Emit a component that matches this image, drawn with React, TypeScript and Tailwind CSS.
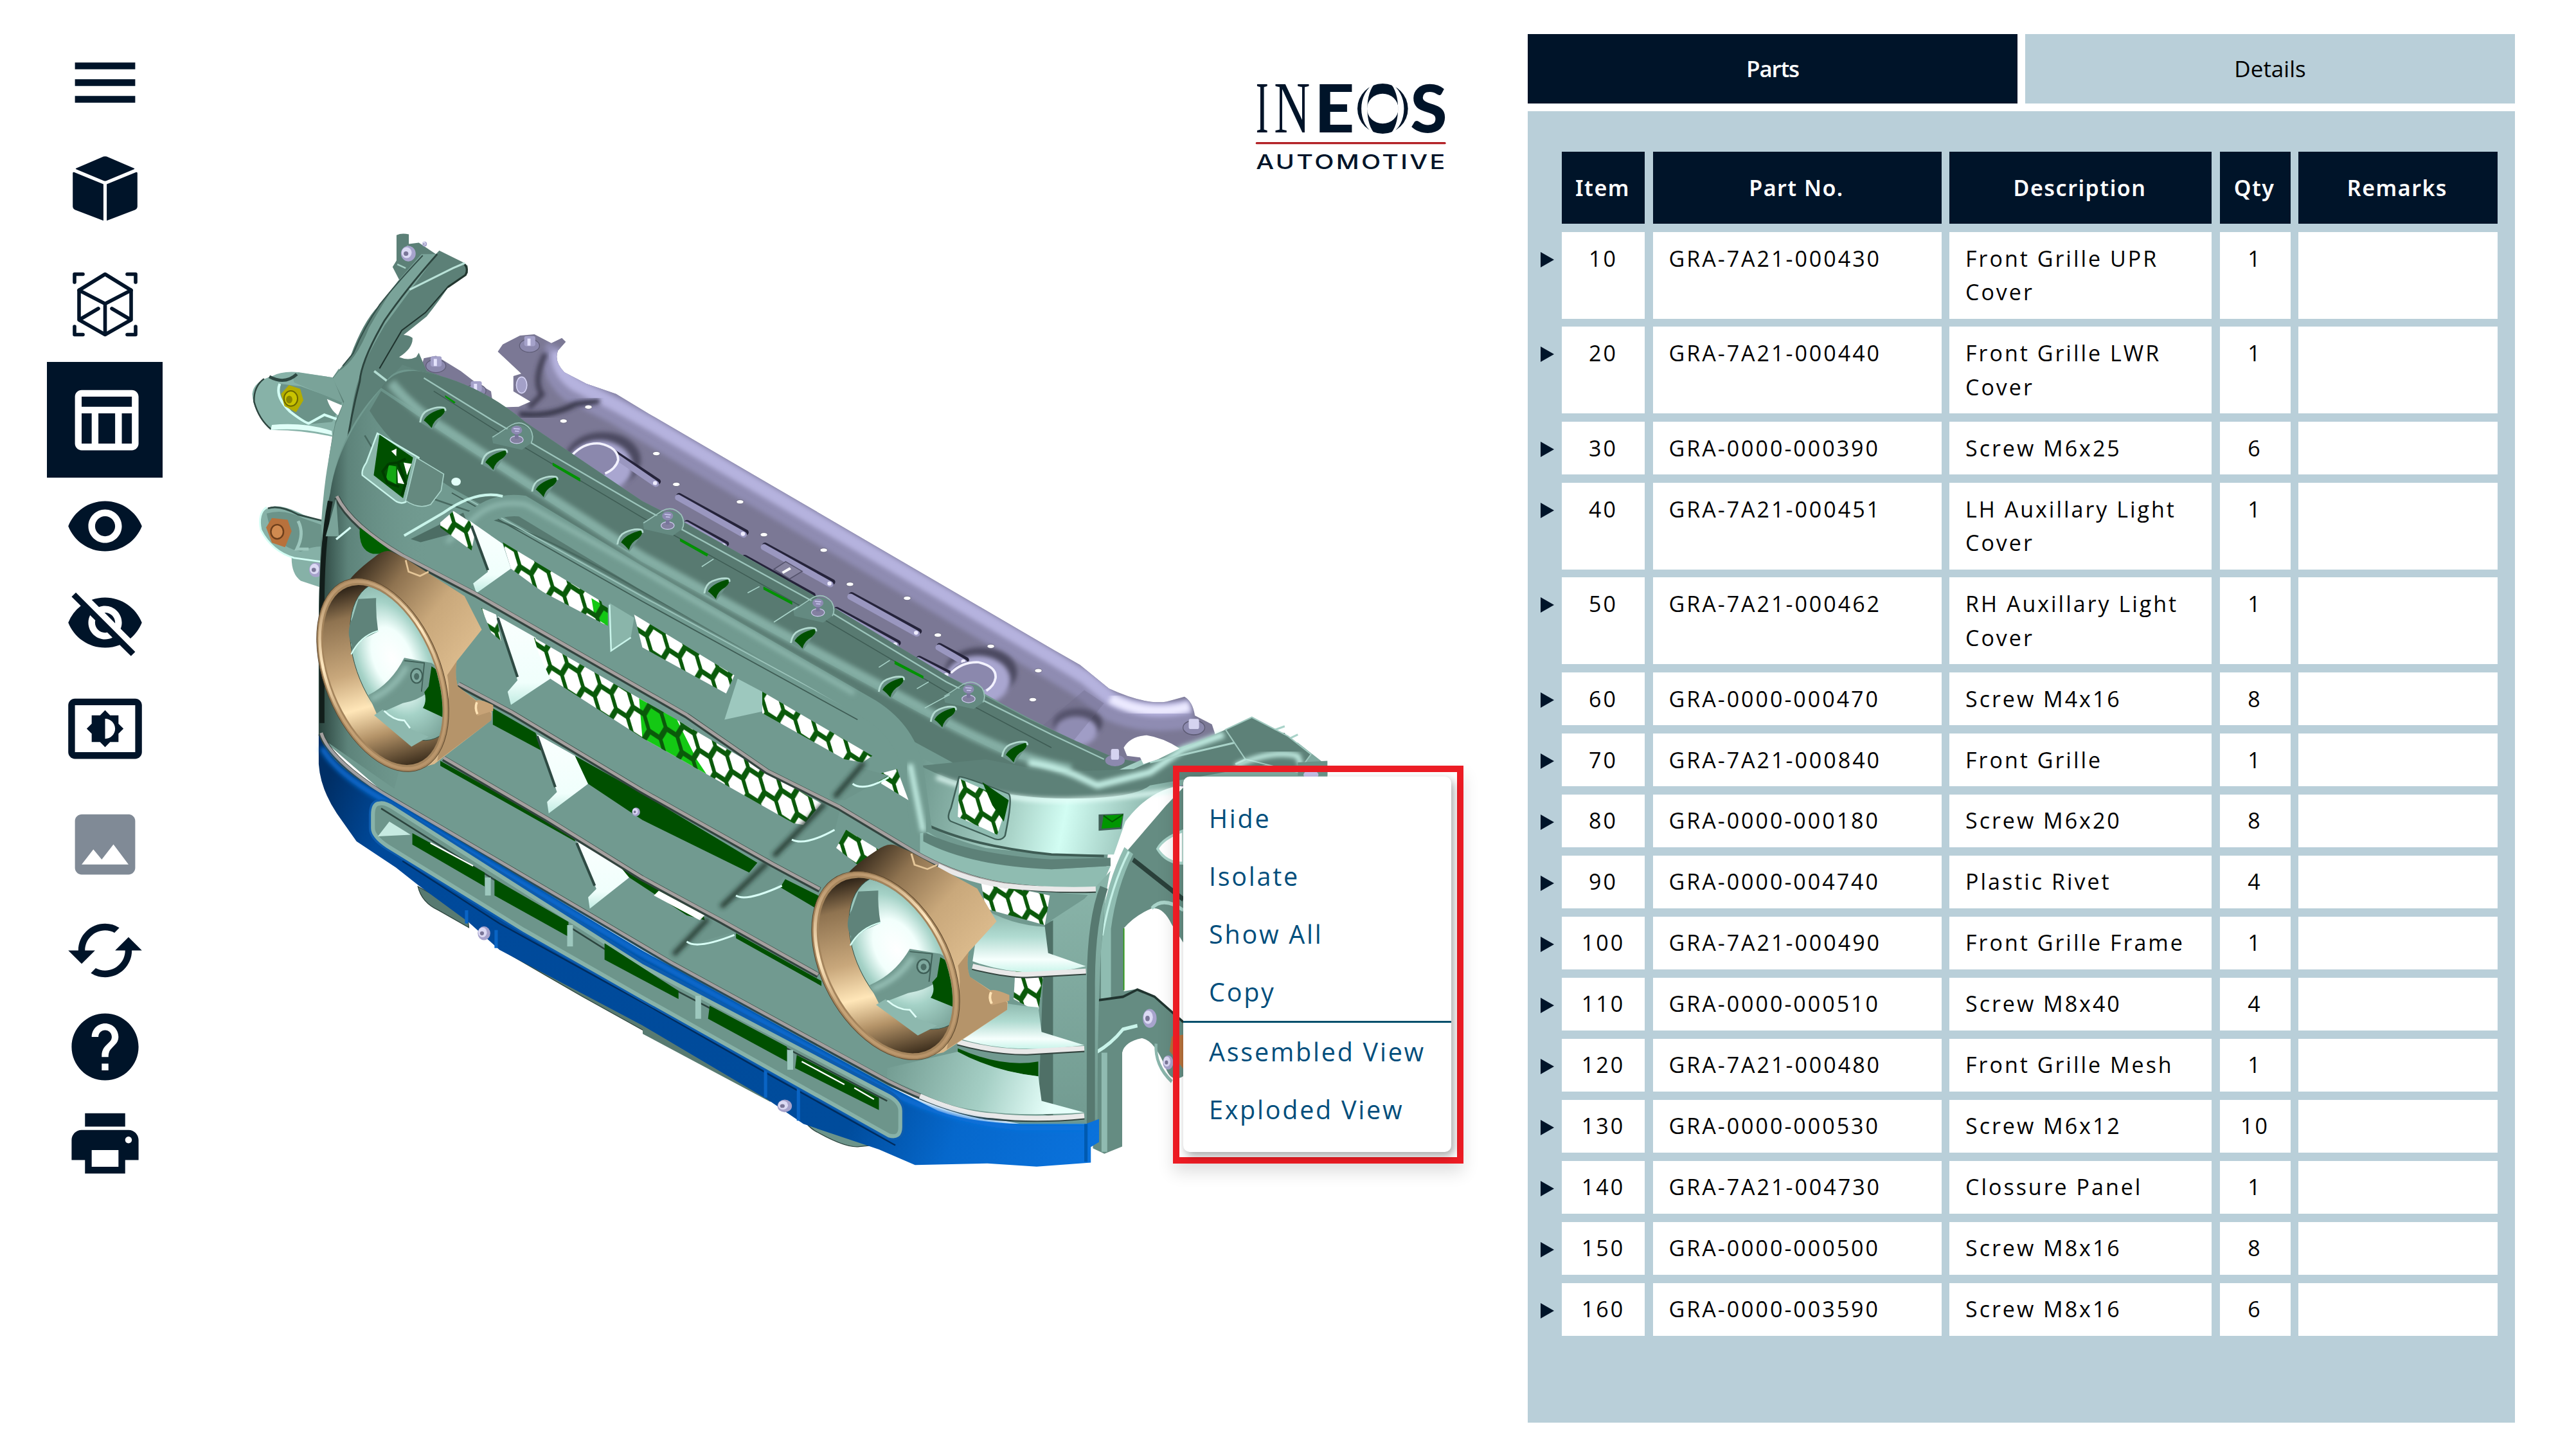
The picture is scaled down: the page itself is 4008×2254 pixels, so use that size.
import React from "react";
import {
  MdMenu,
  MdOutlineTableChart,
  MdVisibility,
  MdVisibilityOff,
  MdSettingsBrightness,
  MdImage,
  MdCached,
  MdHelp,
  MdPrint,
} from "react-icons/md";

const NAVY = "#001429";

function SolidCube() {
  return (
    <svg viewBox="0 0 125 125" className="size-[125px]" fill={NAVY}>
      <path d="M60 12.600Q62.500 11.800 65 12.600L107 30.500Q109.500 31.600 107 32.600L65 50Q62.500 51 60 50L18 32.600Q15.500 31.600 18 30.500Z" />
      <path d="M12.200 38.500Q12.200 36 14.600 37L59.900 55.500V112.200L16 95.600Q12.200 93.500 12.200 90Z" />
      <path d="M112.800 38.500Q112.800 36 110.400 37L65.100 55.500V112.200L109 95.600Q112.800 93.500 112.800 90Z" />
    </svg>
  );
}

function WireCube() {
  return (
    <svg
      viewBox="0 0 125 125"
      className="size-[125px]"
      fill="none"
      stroke={NAVY}
      strokeWidth="5.6"
      strokeLinecap="round"
      strokeLinejoin="round"
    >
      <path d="M15 28V15.500H28M97 15.500H110V28M15 97V109.500H28M97 109.500H110V97" />
      <path d="M62.500 15.500L103 40.500V86.500L62.500 109.500L22 86.500V40.500Z" />
      <path d="M22 40.500L62.500 61.500L103 40.500M62.500 61.500V109" />
      <path d="M24 85.500L52 69M101 85.500L73 69" />
    </svg>
  );
}

const tools = [
  { label: "Menu", tall: false, icon: <MdMenu /> },
  { label: "Solid view", tall: true, icon: <SolidCube /> },
  { label: "Fit view", tall: true, icon: <WireCube /> },
  { label: "Parts table", tall: true, icon: <MdOutlineTableChart />, active: true },
  { label: "Show", tall: false, icon: <MdVisibility /> },
  { label: "Hide", tall: false, icon: <MdVisibilityOff /> },
  { label: "Brightness", tall: true, icon: <MdSettingsBrightness /> },
  { label: "Image", tall: true, icon: <MdImage />, muted: true },
  { label: "Reset", tall: false, icon: <MdCached /> },
  { label: "Help", tall: false, icon: <MdHelp /> },
  { label: "Print", tall: false, icon: <MdPrint /> },
];

function Toolbar() {
  return (
    <nav className="flex w-[253px] shrink-0 flex-col pt-[53px] pl-[73px]">
      {tools.map((t) => (
        <button
          key={t.label}
          aria-label={t.label}
          className={`flex w-[180px] shrink-0 items-center justify-center text-[125px] ${
            t.tall ? "h-[180px]" : "h-[150px]"
          } ${t.active ? "bg-[#001429] text-white" : t.muted ? "text-[#808a96]" : "text-[#001429]"}`}
        >
          {t.icon}
        </button>
      ))}
    </nav>
  );
}

function Logo() {
  return (
    <svg viewBox="0 0 1080 570" className="absolute top-[100px] left-[1667px] h-[190px] w-[360px]">
      <g fill={NAVY}>
        <g fontFamily="'Liberation Serif', serif" fontSize="340">
          <text x="101" y="319" textLength="60" lengthAdjust="spacingAndGlyphs">I</text>
          <text x="187" y="319" textLength="168" lengthAdjust="spacingAndGlyphs">N</text>
        </g>
        <g fontFamily="Lato, sans-serif" fontWeight="900" fontSize="310">
          <text x="375" y="319" textLength="187" lengthAdjust="spacingAndGlyphs">E</text>
          <text x="823" y="319" textLength="172" lengthAdjust="spacingAndGlyphs">S</text>
        </g>
        <ellipse cx="694" cy="207" rx="118" ry="117" />
      </g>
      <g fill="#fff">
        <path d="M662 86C572 130 572 284 662 328C609 284 609 130 662 86Z" />
        <path d="M726 86C816 130 816 284 726 328C779 284 779 130 726 86Z" />
        <ellipse cx="694" cy="207" rx="73" ry="70" />
      </g>
      <rect x="101" y="363" width="888" height="10" rx="5" fill="#b21f24" />
      <text
        x="103"
        y="488"
        textLength="892"
        lengthAdjust="spacingAndGlyphs"
        fontFamily="Inter, sans-serif"
        fontSize="94"
        fontWeight="500"
        letterSpacing="8"
        fill={NAVY}
      >
        AUTOMOTIVE
      </text>
    </svg>
  );
}

/* Coordinate frames of the model's regions. */
const FRAME_TL = "translate(370 340) scale(.40816 .39541)";
const FRAME_TM = "translate(1000 600) scale(.40816 .39541)";
const FRAME_R = "translate(1600 950) scale(.44643 .56122)";
const FRAME_BL = "translate(370 850) scale(.44643)";
const FRAME_BR = "translate(1000 1200) scale(.5102 .40816)";
const FRAME_ALL = "scale(2.5561)";

function Scoop({ x, y }: { x: number; y: number }) {
  return (
    <g transform={`translate(${x} ${y})`}>
      <path d="M-50 32Q-45-5-20-18Q10-32 35-30Q52-28 48-14L-4 60Z" fill="#6b9288" />
      <path d="M-36 24Q-20-8 42-24Q50-10 30 8Q0 24-6 54Q-22 34-36 24Z" fill="#005000" />
      <path d="M-50 32Q-45-5-20-16Q10-30 35-27Q48-26 46-14" fill="none" stroke="#b4dbd1" strokeWidth="7" />
    </g>
  );
}

function Screw({ x, y }: { x: number; y: number }) {
  return (
    <g transform={`translate(${x} ${y})`}>
      <path d="M-95 8L-30-24Q10-55 50-20Q75 10 55 34L20 60L-90 34Z" fill="#648a81" />
      <path d="M-92 10L-20-38Q20-60 52-22Q68 8 55 34" fill="none" stroke="#9cc4bb" strokeWidth="4" />
      <ellipse cx="0" cy="20" rx="25" ry="15" fill="#8380a0" stroke="#cfcdf0" strokeWidth="3" />
      <rect x="-7" y="-18" width="14" height="34" fill="#77749a" />
      <ellipse cx="0" cy="-18" rx="21" ry="17" fill="#8d8ab2" />
      <path d="M-12-24L12-22M-7-14L9-13" stroke="#c9c7ee" strokeWidth="4" />
    </g>
  );
}

function Bolt({ x, y, r = 22 }: { x: number; y: number; r?: number }) {
  return (
    <g transform={`translate(${x} ${y}) scale(${r / 22})`}>
      <ellipse rx="22" ry="24" fill="#a7a3cc" />
      <ellipse cx="-5" cy="-3" rx="15" ry="17" fill="#dcdaf4" />
      <circle cx="-7" cy="0" r="7" fill="#7a7698" />
    </g>
  );
}

function LampRing() {
  return (
    <g>
      <path
        d="M-130-310Q-110-350-30-410Q5-440 30-430L75-408L285-275L345-158L258-48Q250 0 262 40L380 130L378 158L180 310L90 335Z"
        fill="url(#tube)"
      />
      <path d="M225 0Q240 80 215 150L190 300L378 158V132L262 40Q250 0 258-48Z" fill="#8f7049" opacity=".5" />
      <path d="M80-400L90-360L130-345L160-360" fill="none" stroke="#e5c698" strokeWidth="6" />
      <path d="M325 90Q335 80 385 105L385 125L330 142Q315 120 325 90Z" fill="#c7a377" />
      <path d="M328 95Q320 115 330 136" fill="none" stroke="#ffe3b5" strokeWidth="8" />
      <g transform="rotate(-22)">
        <ellipse rx="203" ry="354" fill="#a4845c" stroke="#5a452c" strokeWidth="2" />
        <ellipse rx="192" ry="343" fill="none" stroke="url(#rim)" strokeWidth="10" />
        <ellipse rx="181" ry="330" fill="url(#bore)" />
      </g>
      <g clipPath="url(#boreClip)">
        <g transform="translate(74 -48) rotate(-22)">
          <ellipse rx="166" ry="290" fill="url(#bowl)" stroke="#31524a" strokeWidth="2" />
        </g>
        <path d="M-108-105Q-130-150-105-200L-85-265L-23-268Q-25-210-16-152L-60-130Q-90-110-110-70Z" fill="#5f837a" />
        <path d="M-110-72Q-80-135-16-154" fill="none" stroke="#d7fff5" strokeWidth="5" />
        <path d="M-50 70Q30 30 75-60L170-42L200 -20L158 60Q120 90 70 98L-20 138Z" fill="#6f978d" />
        <path d="M-42 85Q40 50 84-30" fill="none" stroke="#9cc6bc" strokeWidth="16" filter="url(#ringSoft)" />
        <path d="M75-50L145-42L135 58" fill="none" stroke="#3f5f57" strokeWidth="4" />
        <path d="M170-30L200-10L215 150L140 115Q155 90 145 60L160 40Z" fill="#005000" />
        <ellipse cx="118" cy="3" rx="20" ry="25" fill="#7fa99f" stroke="#3f5f57" strokeWidth="5" />
        <ellipse cx="118" cy="5" rx="9" ry="12" fill="#4c6e66" />
        <path d="M0 120Q50 170 80 160L100 190L160 215L100 250L-30 140Z" fill="#8db8ae" />
        <path d="M5 125Q40 160 75 158L95 185" fill="none" stroke="#dffff8" strokeWidth="6" />
      </g>
    </g>
  );
}

function Model() {
  return (
    <svg viewBox="253 0 2124 2254" className="block h-[2254px] w-[2124px]">
      <defs>
        <pattern id="mesh" width="20" height="16" patternUnits="userSpaceOnUse" patternTransform="matrix(1 .65 -.03 1 4 3)">
          <rect width="20" height="16" fill="#0a5a0a" />
          <g fill="#fff">
            <path d="M4.800 8L7.400 1.700H12.600L15.200 8L12.600 14.300H7.400Z" />
            <path d="M-5.200 0L-2.600-6.300H2.600L5.200 0L2.600 6.300H-2.600Z" />
            <path d="M14.800 0L17.400-6.300H22.600L25.200 0L22.600 6.300H17.400Z" />
            <path d="M-5.200 16L-2.600 9.700H2.600L5.200 16L2.600 22.300H-2.600Z" />
            <path d="M14.800 16L17.400 9.700H22.600L25.200 16L22.600 22.300H17.400Z" />
          </g>
        </pattern>
        <pattern id="meshGreen" width="20" height="16" patternUnits="userSpaceOnUse" patternTransform="matrix(1 .65 -.03 1 4 3)">
          <rect width="20" height="16" fill="#0a5a0a" />
          <g fill="#14c814">
            <path d="M4.800 8L7.400 1.700H12.600L15.200 8L12.600 14.300H7.400Z" />
            <path d="M-5.200 0L-2.600-6.300H2.600L5.200 0L2.600 6.300H-2.600Z" />
            <path d="M14.800 0L17.400-6.300H22.600L25.200 0L22.600 6.300H17.400Z" />
            <path d="M-5.200 16L-2.600 9.700H2.600L5.200 16L2.600 22.300H-2.600Z" />
            <path d="M14.800 16L17.400 9.700H22.600L25.200 16L22.600 22.300H17.400Z" />
          </g>
        </pattern>
        <linearGradient id="tube" gradientUnits="userSpaceOnUse" x1="-100" y1="-370" x2="280" y2="-80">
          <stop offset="0" stopColor="#35291b" />
          <stop offset=".3" stopColor="#8f7350" />
          <stop offset=".65" stopColor="#c9a87b" />
          <stop offset="1" stopColor="#dab98b" />
        </linearGradient>
        <linearGradient id="rim" x1="0" y1="0" x2="0" y2="1">
          <stop offset="0" stopColor="#b8946a" />
          <stop offset=".35" stopColor="#ffe8c0" />
          <stop offset=".6" stopColor="#c9a679" />
          <stop offset="1" stopColor="#b8946a" />
        </linearGradient>
        <linearGradient id="bore" gradientUnits="userSpaceOnUse" x1="40" y1="-330" x2="-30" y2="330">
          <stop offset="0" stopColor="#2a2015" />
          <stop offset=".16" stopColor="#8f7350" />
          <stop offset=".45" stopColor="#c9a87c" />
          <stop offset=".64" stopColor="#ffe6b8" />
          <stop offset=".8" stopColor="#b49368" />
          <stop offset="1" stopColor="#3a2c1b" />
        </linearGradient>
        <radialGradient id="bowl" cx=".4" cy=".46" r=".58">
          <stop offset="0" stopColor="#fff" />
          <stop offset=".34" stopColor="#f2fffc" />
          <stop offset=".62" stopColor="#a5d2c7" />
          <stop offset="1" stopColor="#769f95" />
        </radialGradient>
        <clipPath id="boreClip">
          <ellipse rx="181" ry="330" transform="rotate(-22)" />
        </clipPath>
        <linearGradient id="fender" gradientUnits="userSpaceOnUse" x1="560" y1="470" x2="710" y2="500">
          <stop offset="0" stopColor="#719a90" />
          <stop offset=".4" stopColor="#a9d3c8" />
          <stop offset=".6" stopColor="#d2fdf3" />
          <stop offset="1" stopColor="#7fa99f" />
        </linearGradient>
        <linearGradient id="skirt" gradientUnits="userSpaceOnUse" x1="190" y1="500" x2="670" y2="690">
          <stop offset="0" stopColor="#002f66" />
          <stop offset=".08" stopColor="#00499a" />
          <stop offset=".72" stopColor="#004c9c" />
          <stop offset=".84" stopColor="#0668cc" />
          <stop offset="1" stopColor="#0a72dc" />
        </linearGradient>
        <linearGradient id="pillar" gradientUnits="userSpaceOnUse" x1="195" y1="0" x2="262" y2="0">
          <stop offset="0" stopColor="#2c4640" />
          <stop offset=".25" stopColor="#5d837a" />
          <stop offset="1" stopColor="#719a90" stopOpacity="0" />
        </linearGradient>
        <linearGradient id="wedge" x1="0" y1="0" x2="0" y2="1">
          <stop offset="0" stopColor="#fafffe" />
          <stop offset=".75" stopColor="#f0fffc" />
          <stop offset="1" stopColor="#c0ebe1" />
        </linearGradient>
        <linearGradient id="rightCol" x1="0" y1="0" x2="0" y2="1">
          <stop offset="0" stopColor="#8ab5aa" />
          <stop offset="1" stopColor="#729b91" />
        </linearGradient>
        <linearGradient id="slat" x1="0" y1="0" x2="0" y2="1">
          <stop offset="0" stopColor="#86b1a6" />
          <stop offset=".45" stopColor="#b0dbd1" />
          <stop offset=".8" stopColor="#f6fffd" />
          <stop offset="1" stopColor="#c9f4ea" />
        </linearGradient>
        <linearGradient id="sill" gradientUnits="userSpaceOnUse" x1="540" y1="640" x2="640" y2="672">
          <stop offset="0" stopColor="#719a90" />
          <stop offset=".6" stopColor="#a5cfc5" />
          <stop offset="1" stopColor="#e6fffa" />
        </linearGradient>
        <filter id="soft" x="-20%" y="-20%" width="140%" height="140%">
          <feGaussianBlur stdDeviation="1.4" />
        </filter>
        <filter id="ringSoft" x="-20%" y="-20%" width="140%" height="140%">
          <feGaussianBlur stdDeviation="9" />
        </filter>
        <clipPath id="plateClip">
          <path d="M303 214L306 209.600L316.500 204.200L325.300 203.400L335.600 208.800L342 205.700L344.400 208L339.600 213.400Q337 220 343.600 226.600L357 233.600L375 239.700L395 251.800L641.600 395.600L657.400 404.600L675 419Q697 429 710 427L721 424Q726 427 727.300 435.400L737.700 440.800L739.500 446.300L740 480L600 470L256 225L258 218L265.400 216.500L280.500 225.800L288.500 232L298.900 238.200L299.700 243.600L306 247.800L315.700 247.500L322.900 244.400L312.500 238.200V228.900L317.300 227.400Z" />
        </clipPath>
      </defs>

      {/* upper closure panel */}
      <g transform={FRAME_ALL}>
        <g clipPath="url(#plateClip)">
          <rect x="250" y="195" width="500" height="290" fill="#7b7895" />
          <path d="M341 212Q335 224 348 236L376 250L396 262L640 405L660 417L676 430Q698 440 726 434" fill="none" stroke="#8f8cb2" strokeWidth="17" filter="url(#soft)" />
          <path d="M340 214Q338 225 350 234L376 247L396 258L640 400L660 412L676 425Q698 436 724 430" fill="none" stroke="#b5b2de" strokeWidth="8" filter="url(#soft)" />
          <path d="M676 425Q698 437 724 430" fill="none" stroke="#eceaff" strokeWidth="6" filter="url(#soft)" />
          <path d="M332 215Q324 232 330 240L322 248" fill="none" stroke="#3c3a50" strokeWidth="3" filter="url(#soft)" />
          <path d="M316 252Q335 254 350 246L365 244" fill="none" stroke="#2f2d40" strokeWidth="3" filter="url(#soft)" />
          <ellipse cx="367" cy="280" rx="23" ry="17" fill="#4c4a60" filter="url(#soft)" />
          <ellipse cx="365" cy="284" rx="20" ry="16" fill="#a9a6d0" filter="url(#soft)" />
          <ellipse cx="597" cy="409" rx="22" ry="15" fill="#4c4a60" filter="url(#soft)" />
          <ellipse cx="595" cy="414" rx="20" ry="15" fill="#a9a6d0" filter="url(#soft)" />
          <ellipse cx="656" cy="440" rx="15" ry="9" fill="#4c4a60" filter="url(#soft)" />
          <ellipse cx="655" cy="445" rx="13" ry="9" fill="#a09dc6" filter="url(#soft)" />
          <path d="M627 448L660 420L672 428L650 455Z" fill="#6a6784" opacity=".3" />
        </g>
      </g>
      <g transform={FRAME_TM}>
        {[
          [-130, 255, 50, 383],
          [135, 437, 385, 583],
          [462, 632, 715, 778],
          [792, 827, 1045, 972],
          [1128, 1027, 1225, 1085],
          [165, 543, 310, 628],
          [385, 680, 640, 830],
          [735, 885, 965, 1018],
          [1050, 1077, 1160, 1138],
        ].map(([a, b, c, d]) => (
          <g key={a + "-" + b} strokeLinecap="round">
            <line x1={a + 4} y1={b - 4} x2={c + 8} y2={d - 6} stroke="#25233a" strokeWidth="22" />
            <line x1={a} y1={b + 3} x2={c} y2={d + 3} stroke="#9a97c0" strokeWidth="24" />
            <circle cx={c - 3} cy={d} r="8" fill="#eeecff" />
          </g>
        ))}
        <path d="M500 722L545 692L608 730L560 760Z" fill="#86839f" stroke="#55536c" strokeWidth="4" />
        <path d="M530 732L560 714L566 722L536 740Z" fill="#fff" />
        <g fill="#fff" stroke="#5d5b74" strokeWidth="2">
          {[
            [52, 267], [128, 388], [371, 457], [462, 586], [690, 647], [790, 781],
            [1008, 836], [1125, 981], [1327, 1025], [1508, 1121], [1487, 1235],
            [-207, 84], [-302, 139],
          ].map(([x, y]) => (
            <ellipse key={x} cx={x} cy={y} rx="14" ry="8" />
          ))}
        </g>
        <ellipse cx="1255" cy="1145" rx="85" ry="62" fill="#8b88ad" />
        <path d="M1175 1130Q1220 1085 1280 1088Q1350 1105 1345 1150Q1340 1180 1310 1200" fill="none" stroke="#f3f2ff" strokeWidth="9" />
      </g>
      <g transform={FRAME_TL}>
        <ellipse cx="1360" cy="950" rx="85" ry="66" fill="#8b88ad" />
        <path d="M1275 930Q1320 880 1380 885Q1450 900 1450 950Q1440 985 1400 1003" fill="none" stroke="#f3f2ff" strokeWidth="9" />
        {[[1112, 490], [755, 570], [908, 668]].map(([x, y]) => (
          <g key={x} transform={`translate(${x} ${y})`}>
            <ellipse cy="10" rx="38" ry="26" fill="#8c89ae" stroke="#5d5b74" strokeWidth="3" />
            <rect x="-20" y="-28" width="42" height="40" rx="8" fill="#a5a2ca" />
            <rect x="-8" y="-18" width="12" height="28" fill="#e4e2fb" />
          </g>
        ))}
        <ellipse cx="1082" cy="655" rx="20" ry="32" fill="#a3a0c8" stroke="#d4d2f3" strokeWidth="4" />
        <path d="M1140 850L1260 930" stroke="#25233a" strokeWidth="18" strokeLinecap="round" />
        <path d="M1145 860L1255 932" stroke="#9a97c0" strokeWidth="16" strokeLinecap="round" />
      </g>

      {/* left-hand brackets and tower */}
      <g transform={FRAME_TL}>
        <path d="M360 625L235 605Q170 598 130 620Q60 640 55 690Q58 760 125 832Q240 830 360 858L420 700Z" fill="#87b2a8" />
        <path d="M100 630Q60 660 62 720Q80 790 128 830" fill="none" stroke="#2c443e" strokeWidth="6" />
        <path d="M160 650Q150 740 260 810L360 800L400 720L240 660Z" fill="#6b9389" />
        <path d="M125 832Q240 820 360 852L358 835Q250 800 130 812Z" fill="#e0fff8" />
        <path d="M160 650Q140 700 200 760Q250 800 270 806L330 772L380 790" fill="none" stroke="#d4fff5" strokeWidth="10" />
        <path d="M340 710Q355 760 392 780L398 735Z" fill="#fff" />
        <path d="M210 625L230 606L362 625L385 590L430 705L400 725L215 645Z" fill="#7aa399" />
        <path d="M120 622Q180 655 225 612" fill="none" stroke="#2f4943" strokeWidth="12" />
        <path d="M165 690L195 655L238 670L250 715L222 762L178 738Z" fill="#b3ad00" />
        <ellipse cx="202" cy="708" rx="26" ry="30" fill="#c9c300" stroke="#6b6800" strokeWidth="5" />
        <ellipse cx="196" cy="712" rx="12" ry="15" fill="#8a8600" />

        <path d="M322 1190L250 1165Q180 1130 140 1132Q85 1140 84 1190Q90 1250 130 1285Q170 1320 205 1335Q205 1400 240 1425L312 1450Z" fill="#86b1a7" />
        <path d="M110 1160Q180 1140 250 1180L320 1205V1290Q280 1290 240 1310Q130 1290 110 1160Z" fill="#6b9389" />
        <path d="M110 1135Q75 1160 88 1225Q130 1310 215 1335L320 1350" fill="none" stroke="#d4fff5" strokeWidth="7" />
        <path d="M230 1190Q255 1240 225 1300L270 1300" fill="none" stroke="#9cc6bc" strokeWidth="12" />
        <path d="M115 1140Q160 1125 230 1165L320 1188" fill="none" stroke="#2f4943" strokeWidth="7" />
        <path d="M108 1215L130 1178L190 1185L205 1230L180 1293L130 1275Z" fill="#b8713c" />
        <ellipse cx="150" cy="1232" rx="24" ry="28" fill="#d08a50" stroke="#6e3f1c" strokeWidth="6" />
        <Bolt x={298} y={1382} r={26} />

        <path
          d="M605 65Q625 55 652 62V100L690 95L755 140L768 126L825 155L855 170L876 185V215Q840 250 802 270Q770 320 720 385L632 458Q655 460 666 470Q668 510 615 545Q650 560 680 545L690 528L720 600Q860 640 980 770L900 1000L540 1568H312Q305 1200 360 860L372 800L402 725L362 625L430 540Q480 400 540 340L615 240L590 190L605 165Z"
          fill="#5c8077"
        />
        <path d="M700 140L615 240Q560 320 500 430Q450 560 385 600L362 630L405 720L372 810Q330 1000 318 1200L330 1500L420 1300Q400 800 465 620Q480 560 560 420L760 140Z" fill="#7aa399" />
        <path d="M760 140Q640 280 560 400Q470 560 465 640Q430 780 415 900Q410 1000 470 1060" fill="none" stroke="#2c443e" strokeWidth="7" />
        <path d="M705 145Q600 260 540 340Q480 430 440 530L400 580" fill="none" stroke="#34504a" strokeWidth="5" />
        <path d="M655 280L820 195L865 175" fill="none" stroke="#b9e2d8" strokeWidth="8" />
        <path d="M800 270L715 370L625 440L540 590" fill="none" stroke="#1f332e" strokeWidth="5" />
        <path d="M520 600L585 652L612 640" fill="none" stroke="#b3dcd2" strokeWidth="9" />
        <path d="M865 180Q880 200 868 222L800 270" fill="none" stroke="#22362f" strokeWidth="8" />
        <path d="M608 180L640 195M645 108L665 120" stroke="#a6cfc5" strokeWidth="6" />
        <Bolt x={650} y={138} r={28} />
        <Bolt x={712} y={100} r={9} />
      </g>

      {/* lower flaps behind the skirt */}
      <g transform={FRAME_BL}>
        <path d="M628 1185Q640 1240 700 1268L805 1328L800 1280Z" fill="#587a71" stroke="#2c443e" strokeWidth="3" />
        <path d="M920 1375L930 1412L1200 1568L1420 1690L1400 1600Z" fill="#587a71" stroke="#2c443e" strokeWidth="3" />
      </g>
      <g transform={FRAME_BR}>
        <path d="M0 1000L390 1260L375 1200L0 940Z" fill="#587a71" />
        <path d="M488 1300Q490 1350 540 1380Q620 1435 660 1430L700 1425Z" fill="#6c948a" stroke="#2c443e" strokeWidth="3" />
      </g>

      {/* right-hand support */}
      <g transform={FRAME_R}>
        <path d="M345 665L480 540L540 490V920L500 870Q470 820 430 825Q370 845 333 880V1055L380 1048L440 1070L540 1140V1290Q500 1310 480 1270Q440 1190 395 1185Q335 1195 327 1225V1485L265 1505L225 1490V900Z" fill="#658c82" />
        <path d="M350 665Q290 760 270 880V1075" fill="none" stroke="#8fbcb1" strokeWidth="36" filter="url(#soft)" />
        <path d="M350 668Q290 760 258 900" fill="none" stroke="#c5f0e6" strokeWidth="7" />
        <path d="M240 1080L330 1070L380 1050L440 1070L540 1140" fill="none" stroke="#20342f" strokeWidth="7" />
        <path d="M235 1225Q290 1200 330 1160L380 1150" fill="none" stroke="#c9f4ea" strokeWidth="10" />
        <path d="M265 1225V1500" stroke="#90bbb1" strokeWidth="20" />
        <path d="M333 880V1052" stroke="#2f9b14" strokeWidth="4" />
        <path d="M365 690L540 800" stroke="#2a403a" strokeWidth="14" />
        <path d="M450 660Q470 630 540 610V700Q480 700 450 660Z" fill="#fff" stroke="#a9d3c9" strokeWidth="8" />
        <path d="M430 825Q470 790 540 830" fill="none" stroke="#a9d3c9" strokeWidth="10" />
        <path d="M540 1175L500 1180L492 1220L540 1270Z" fill="#b8713c" />
        <path d="M445 1200Q440 1260 500 1305" fill="none" stroke="#8ab5ab" strokeWidth="10" />
        <Bolt x={423} y={1130} r={24} />
        <Bolt x={487} y={1252} r={18} />
      </g>

      {/* grille body */}
      <g transform={FRAME_ALL}>
        <path
          d="M256 226Q240 222 234 234Q206 262 201 300Q194 330 194 380V448L232 481L391 578L541 661L581 676L621 684H661L668 681V600L672 560Q672 510 684 480L706 452L720 455L699 465L678 461L655 451Q625 437 599 422L576 411L508 370L493 361L415 317L391 305L320 257Q290 232 256 226Z"
          fill="#719a90"
        />
        <path d="M245 222Q206 262 201 300Q194 330 194 380V448L240 480L262 400V228Z" fill="url(#pillar)" />

        {/* top deck */}
        <path d="M256 226Q240 224 232 236L272 262L304 282L391 339L471 383L563 432L615 458L652 471L720 470L746 445L720 455L699 465L678 461L655 451L625 437L576 411L508 370L493 361L415 317L391 305L320 257Q290 232 256 226Z" fill="#587a71" />
        <path d="M225 250Q240 275 275 297L391 362L530 437L600 475L700 470L660 468L615 461L560 434L391 342L272 265L232 238Z" fill="#587a71" />
        <path d="M238 233Q252 250 272 262L304 283L391 339L471 383L563 432Q610 460 652 468" fill="none" stroke="#84aea4" strokeWidth="6" filter="url(#soft)" />
        <path d="M222 265Q236 290 262 303L300 316Q330 325 391 360L470 403L540 442Q560 455 562 475" fill="none" stroke="#486960" strokeWidth="1" />
        <path d="M285 304L391 363L520 433" fill="none" stroke="#9cc4bb" strokeWidth=".7" />
        <path d="M275 300L391 366L522 438" fill="none" stroke="#3e5c54" strokeWidth=".7" />
        <path d="M258 230L300 256L391 309L493 365L576 415L640 447L672 462" fill="none" stroke="#9cc4bb" strokeWidth=".9" />
        <path d="M264 238L302 262L391 315L493 372L576 421L640 455" fill="none" stroke="#3e5c54" strokeWidth=".6" />

        {/* fender */}
        <path d="M559 460Q590 478 626 476L660 478L700 460L745 447L790 452L808 466V480L720 478Q700 480 685 500L678 520H640L600 516Q575 510 562 500Z" fill="url(#fender)" />
        <path d="M560 466Q600 486 650 486Q690 486 700 478L790 462L782 446L746 444L690 468L640 470L600 462Z" fill="#5d8178" />
        <path d="M570 473Q610 488 650 487Q680 486 715 481" fill="none" stroke="#e6fffa" strokeWidth="2.500" filter="url(#soft)" />
        <path d="M626 464Q640 466 653 471L668 478L700 470L720 456L745 447" fill="none" stroke="#c5f0e6" strokeWidth="4" filter="url(#soft)" />
        <path d="M700 464L760 450L782 442M752 465L790 447" fill="none" stroke="#a9d3c9" strokeWidth="1.200" />
        <path d="M746 444L762 436.500L784 448L798 459L790 470L758 462Z" fill="#5d8178" stroke="#a0c9bf" strokeWidth=".8" />
        <path d="M752 466Q775 456 790 460L792 466" fill="none" stroke="#c9f4ea" strokeWidth="3" filter="url(#soft)" />
        <path d="M790 464L808 463L808 472H790Z" fill="#6b9389" />
        <path d="M684 455Q688 448 698 447.500Q708 449 718 455.500L705 462L696 465L694 461L686 460Z" fill="#fff" />
        <path d="M560 500Q590 515 640 520L672 521" fill="none" stroke="#3e5c54" strokeWidth="1.500" />
        <path d="M560 503Q590 525 640 529L676 527L668 545L640 543Q590 540 560 520Z" fill="#8fbcb1" />
        <path d="M562 506Q590 520 640 523L676 522L676 527L640 529Q590 527 562 512Z" fill="#5d8178" />

        {/* right column */}
        <path d="M640 560L660 547L676 530Q668 560 668 681L640 680Z" fill="url(#rightCol)" />
        <path d="M636 563L641 560V680L632 677Z" fill="#4f7067" />
        <path d="M672 540Q664 560 664 600V684" fill="none" stroke="#577970" strokeWidth="5" />

        {/* frame lip */}
        <path d="M274 330L290 316Q302 306 318 308L391 352L530 432Q552 446 556 470L561 507" fill="none" stroke="#719a90" strokeWidth="13" />
        <path d="M272 330L290 314Q302 304 320 307L391 347L520 422" fill="none" stroke="#8cb6ac" strokeWidth="3" filter="url(#soft)" />
        <path d="M554 465L562 506" stroke="#c9f4ea" strokeWidth="3" filter="url(#soft)" />
        <path d="M246 326L270 312Q290 298 306 302" fill="none" stroke="#c9f4ea" strokeWidth="1.600" />
        <path d="M250 328L282 312L286 322L256 330Z" fill="#4c6d64" />
      </g>

      {/* grille openings */}
      <g transform={FRAME_ALL}>
        {/* band A */}
        <path d="M268 318L276 311L290 320L287 335L268 321Z" fill="url(#mesh)" />
        <path d="M286 317L306 331L311 346L290 361L288 355L297 348Z" fill="url(#wedge)" />
        <path d="M306 330L366 366L369 376L368 380L330 360L311 346Z" fill="url(#mesh)" />
        <path d="M386 374L391 377L447 411L442 422L391 394Z" fill="url(#mesh)" />
        <path d="M360 364L370 370L370 381L362 376Z" fill="url(#meshGreen)" />
        <path d="M371 367L386 376L384 388L372 396Z" fill="#8ab5aa" />
        <path d="M371 368L372 396L384 388" fill="none" stroke="#c9f4ea" strokeWidth="1" />
        <path d="M449 413L464 421V433L441 438Z" fill="#9dc8be" />
        <path d="M464 421L531 460L525 464L514 462L464 434Z" fill="url(#mesh)" />
        <path d="M531 472L546 468L553 487L530 473Z" fill="url(#mesh)" />

        {/* band B */}
        <path d="M293 370L302 374L305 390L299 385Z" fill="url(#mesh)" />
        <path d="M303 375L326 388L335 413L311 429L309 421L315 414Z" fill="url(#wedge)" />
        <path d="M325 388L391 426L434 451L500 489L489 502L483 501L391 449L335 413L328 398Z" fill="url(#mesh)" />
        <path d="M389 425L412 438L424 462L430 471L391 449Z" fill="url(#meshGreen)" />
        <path d="M515 505L543 522L528 531L509 516Z" fill="url(#mesh)" />

        {/* band C */}
        <path d="M300 431L326 446L330 457L300 441Z" fill="#005000" />
        <path d="M327 447L350 460L358 477L334 495L333 488L339 482Z" fill="url(#wedge)" />
        <path d="M350 460L391 483L461 525L456 531L391 499L358 477Z" fill="#005000" />
        <path d="M478 535L500 546L497 553L475 540Z" fill="#005000" />

        {/* band D */}
        <path d="M268 463L350 509L350 512L268 466Z" fill="#005000" />
        <path d="M351 512L378 528L383 534L359 553L358 546L363 541Z" fill="url(#wedge)" />
        <path d="M378 528L428 556L429 560L418 557L383 534Z" fill="#005000" />
        <path d="M401 542L429 557L426 560L398 545Z" fill="#fff" />
        <path d="M448 568L500 597V600L448 571Z" fill="#005000" />
        <g fill="none" stroke="#2e4a43" strokeWidth="1.600">
          <path d="M287 320L297 347" />
          <path d="M303 376L315 412" />
          <path d="M327 448L338 479" />
          <path d="M351 513L362 539" />
        </g>

        {/* ribs right of centre */}
        {[
          "M523 467L541 472L514 487L507 486Z",
          "M502 489L511 494L508 506L484 513L470 521Z",
          "M467 525L478 532L472 540L454 546L439 552Z",
          "M431 559L447 567L420 575L411 580Z",
        ].map((d) => (
          <path key={d} d={d} fill="#6d958b" />
        ))}
        <g fill="none" stroke="#1c2d28" strokeWidth="3" opacity=".85" filter="url(#soft)">
          <path d="M526 464L508 485" />
          <path d="M502 489L471 521" />
          <path d="M467 525L439 552" />
          <path d="M431 559L410 581" />
        </g>
        <g fill="none" stroke="#d8fff6" strokeWidth="1.200">
          <path d="M519 477Q526 482 541 473" />
          <path d="M482 511Q490 515 508 505" />
          <path d="M448 545Q454 549 476 539" />
          <path d="M418 573Q424 578 447 569" />
        </g>

        {/* right slats and mesh */}
        <path d="M597 536L639 545L636 563L600 553Z" fill="url(#mesh)" />
        <path d="M618 590L635 594L632 616L617 608Z" fill="url(#mesh)" />
        <path d="M597 552Q615 563 636 564L638 580L661 588Q625 597 592 585Z" fill="url(#slat)" />
        <path d="M600 608Q616 612 632 613L634 628L660 636Q615 642 584 632Z" fill="url(#slat)" />
        <path d="M583 638Q610 650 632 646V655Q605 652 583 642Z" fill="#005000" />
        <path d="M540 650L583 640Q605 652 632 655L634 670L660 677Q600 681 571 670L540 656Z" fill="url(#sill)" />

        {/* trim strips */}
        <g fill="none" strokeLinejoin="round">
          {[
            "M205 302Q214 320 245 338L289 361L418 435L467 469L511 491L551 515Q580 533 611 538Q640 542 667 541",
            "M279 416L311 433L391 481L471 526L499 541",
            "M592 588Q612 593 625 593L661 591",
            "M270 461L333 498L391 534L439 560L498 593",
            "M583 634Q605 640 625 640L660 638",
            "M195.500 446Q200 461 232 482L360 557L409 586L541 658Q575 675 600 679Q630 682 660 679",
          ].map((d) => (
            <g key={d}>
              <path d={d} stroke="#33443f" strokeWidth="3.400" transform="translate(0 .6)" />
              <path d={d} stroke="#a5a09f" strokeWidth="1.900" />
            </g>
          ))}
          <g stroke="#e9e9e9" strokeWidth="3">
            <path d="M571 527Q590 536 611 539Q640 542 667 541" />
            <path d="M592 588Q612 593 625 593L661 591" />
            <path d="M583 634Q605 640 625 640L660 638" />
            <path d="M560 667Q585 678 605 679Q630 682 660 679" />
          </g>
        </g>
        <path d="M201 305Q196 330 196 370V440" fill="none" stroke="#121d1a" strokeWidth="3" />
        <path d="M219 321Q218 335 227 337L240 337Z" fill="#006000" />
      </g>

      {/* lamp apertures in the bumper */}
      <g transform={FRAME_TL}>
        <path d="M532 845L690 940L640 1115Q620 1125 600 1110L475 1010Q470 990 490 960Z" fill="#8ab5aa" stroke="#c9f4ea" strokeWidth="6" />
        <path d="M540 850L668 940L630 1100L518 1010Z" fill="#005000" />
        <path d="M585 915L605 905L604 935ZM632 960L662 965L645 1010ZM608 985L635 1045L610 1040Z" fill="#fff" />
        <path d="M575 970L604 975V1045L565 1025Z" fill="#14a814" />
        <path d="M575 965L610 960L640 1040L625 1090M575 965L552 995L570 1040L615 1055M610 960L640 945" fill="none" stroke="#003c00" strokeWidth="10" />
        <path d="M680 940L785 1005L775 1070L735 1125Q690 1145 640 1110Z" fill="#65897f" stroke="#a9d3c9" strokeWidth="4" />
        <path d="M335 1250L375 1100L385 1250Z" fill="#7aa399" />
        <path d="M375 1262L430 1215" stroke="#d8fff6" strokeWidth="8" />
        <Screw x={1063} y={850} />
        {[[745, 770], [980, 935], [1172, 1042], [1497, 1250]].map(([x, y]) => (
          <Scoop key={x} x={x} y={y} />
        ))}
        <path d="M1200 960L1305 1022V1035L1200 972ZM790 695L830 722L825 728L790 702Z" fill="#009200" />
        <ellipse cx="832" cy="1035" rx="18" ry="16" fill="#e3fff9" filter="url(#soft)" />
      </g>
      <g transform={FRAME_TM}>
        {[[285, 785], [615, 980], [950, 1172], [1148, 1290], [1420, 1428]].map(([x, y]) => (
          <Scoop key={x} x={x} y={y} />
        ))}
        {[[95, 530], [668, 872], [1242, 1212]].map(([x, y]) => (
          <Screw key={x} x={x} y={y} />
        ))}
        <path d="M142 600L250 662L245 672L142 612ZM460 790L570 850V862L460 802ZM960 1082L1070 1142V1153L960 1095Z" fill="#009200" />
        <path d="M225 712L270 682M400 815L445 790M900 1108L942 1080M1045 1192L1090 1165M500 930L590 870M1075 1268L1170 1215" stroke="#a9d3c9" strokeWidth="4" />
      </g>
      <g transform={FRAME_R}>
        <g transform="translate(577 318)">
          <ellipse cy="6" rx="38" ry="20" fill="#8c89ae" stroke="#5d5b74" strokeWidth="3" />
          <rect x="-18" y="-18" width="36" height="28" rx="6" fill="#d5d3f0" />
        </g>
        <g transform="translate(302 405)">
          <ellipse cy="10" rx="34" ry="16" fill="#8c89ae" />
          <rect x="-14" y="-22" width="28" height="30" rx="6" fill="#d5d3f0" />
        </g>
        <path d="M245 565L332 562L325 605L245 610Z" fill="#3f5f57" />
        <path d="M262 568L330 565L320 600L255 604Z" fill="#009600" />
        <path d="M262 568L292 585L330 565" fill="none" stroke="#005c00" strokeWidth="4" />
        <ellipse cx="985" cy="455" rx="26" ry="12" fill="#c3c0e6" />
      </g>
      <g transform={FRAME_BR}>
        <path d="M965 20Q980 18 1115 85Q1130 95 1105 245Q1095 265 1075 258L940 190Q925 180 940 140Z" fill="#8fbcb1" stroke="#3f5f57" strokeWidth="5" />
      </g>
      <g transform={FRAME_ALL}>
        <path d="M584 474L614 487L607 508L583 497Z" fill="url(#mesh)" />
        <path d="M598 476L614 487L611 500L604 490Z" fill="#005000" />
      </g>

      {/* blue skirt */}
      <g transform={FRAME_ALL}>
        <path
          d="M194 447V465Q195 480 205 495L217 512L241 528L255 539L285 561L304 578L391 624L467 669L489 684L535 699.500L557 709L601 708L631 710L664 707.500V698L669 695V681L661 684H621Q590 683 571 676L541 661L391 578.500L232 483Q200 465 194 447Z"
          fill="url(#skirt)"
        />
        <path d="M196 455Q204 470 232 486L391 581L541 664Q575 682 621 686.500H661" fill="none" stroke="#0a72dc" strokeWidth="3" filter="url(#soft)" />
        <path d="M661 684V707" stroke="#005ab0" strokeWidth="2" />
        <path d="M245 524L304 562L391 610L470 655L545 697" fill="none" stroke="#002b5c" strokeWidth=".9" />
        <path d="M284 554V562M302 566V577M466 650V668M486 662V682" stroke="#0a64c4" strokeWidth="2" />
        {/* recess */}
        <path d="M231 488Q226 488 226 496V504Q226 510 236 516L319 567L391 608L541 692Q549 694 549 686V676Q549 670 541 665L391 586L240 491Q234 487 231 488Z" fill="#6d958b" stroke="#0d5cae" strokeWidth="3" />
        <path d="M231 489Q227 489 227 496V504Q227 509 236 515L319 566L391 607L541 691Q548 693 548 686V676Q548 671 541 667L391 588L240 492Q234 488 231 489Z" fill="none" stroke="#88b2a8" strokeWidth="2.400" />
        <path d="M232 492L391 592L540 670" fill="none" stroke="#2c443e" strokeWidth="1" />
        <path d="M230 509L237 500L250 508Z" fill="#dcfff6" opacity=".8" />
        <g fill="#005000">
          <path d="M251 507L295 531V539.500L251 514Z" />
          <path d="M301 535L346 561V570L301 545Z" />
          <path d="M368 574L413 603V608L368 584Z" />
          <path d="M432 612L479 637V646L431 620Z" />
          <path d="M485 642L535 668V675.500L484 650Z" />
        </g>
        <path d="M262 513L288 527M488 646L514 660M520 662L532 669" stroke="#fff" strokeWidth=".9" />
        <path d="M297 534V545M347 563V576M425 606V620M481 639V651" stroke="#9dc8be" strokeWidth="3.500" />
      </g>
      <g transform={FRAME_BL}>
        <Bolt x={858} y={1348} />
        <Bolt x={1388} y={925} r={14} />
      </g>
      <g transform={FRAME_BR}>
        <Bolt x={433} y={1275} />
      </g>

      {/* lamp rings */}
      <g transform="translate(595.500 1050) scale(.4464)">
        <LampRing />
      </g>
      <g transform="translate(1378 1502) scale(.5 .4352)">
        <LampRing />
      </g>
    </svg>
  );
}

const menuTop = ["Hide", "Isolate", "Show All", "Copy"];
const menuBottom = ["Assembled View", "Exploded View"];

function ContextMenu() {
  return (
    <div className="absolute top-[1191px] left-[1572px] h-[619px] w-[452px] border-[10px] border-[#ec1c24] pt-[7px] pl-[6px] shadow-[0_14px_24px_rgba(0,0,0,0.12)]">
      <div className="h-[584px] w-[417px] rounded-[10px] bg-white pt-[20px] font-['Open_Sans',sans-serif] text-[39.500px] tracking-[2.750px] text-[#004e7c] shadow-[4px_6px_14px_rgba(0,0,0,0.35)]">
        <ul className="border-b-[3px] border-[#004e6b]">
          {menuTop.map((m) => (
            <li key={m} className="h-[90px] pl-[40px] leading-[90px] whitespace-nowrap">
              {m}
            </li>
          ))}
        </ul>
        <ul>
          {menuBottom.map((m) => (
            <li key={m} className="h-[90px] pl-[40px] leading-[90px] whitespace-nowrap">
              {m}
            </li>
          ))}
        </ul>
      </div>
    </div>
  );
}

const parts: [number, string, string, number][] = [
  [10, "GRA-7A21-000430", "Front Grille UPR Cover", 1],
  [20, "GRA-7A21-000440", "Front Grille LWR Cover", 1],
  [30, "GRA-0000-000390", "Screw M6x25", 6],
  [40, "GRA-7A21-000451", "LH Auxillary Light Cover", 1],
  [50, "GRA-7A21-000462", "RH Auxillary Light Cover", 1],
  [60, "GRA-0000-000470", "Screw M4x16", 8],
  [70, "GRA-7A21-000840", "Front Grille", 1],
  [80, "GRA-0000-000180", "Screw M6x20", 8],
  [90, "GRA-0000-004740", "Plastic Rivet", 4],
  [100, "GRA-7A21-000490", "Front Grille Frame", 1],
  [110, "GRA-0000-000510", "Screw M8x40", 4],
  [120, "GRA-7A21-000480", "Front Grille Mesh", 1],
  [130, "GRA-0000-000530", "Screw M6x12", 10],
  [140, "GRA-7A21-004730", "Clossure Panel", 1],
  [150, "GRA-0000-000500", "Screw M8x16", 8],
  [160, "GRA-0000-003590", "Screw M8x16", 6],
];

const headers = ["Item", "Part No.", "Description", "Qty", "Remarks"];

function PartsPanel() {
  return (
    <section className="mr-[95px] flex w-[1536px] shrink-0 flex-col pt-[53px] font-['Open_Sans',sans-serif] text-[34px] text-black">
      <div className="flex h-[108px] gap-[12px] text-[35px]">
        <button className="w-[762px] bg-[#001429] font-semibold tracking-[-1.200px] text-white">Parts</button>
        <button className="flex-1 bg-[#b9cfd9]">Details</button>
      </div>
      <div className="mt-[12px] h-[2040px] bg-[#b9cfd9] pt-[63px]">
        <div className="mb-[13px] grid h-[112px] grid-cols-[129px_449px_408px_110px_310px] gap-[12.500px] pl-[53px]">
          {headers.map((h) => (
            <div
              key={h}
              className="flex items-center justify-center bg-[#001429] pr-[2px] font-['Noto_Sans',sans-serif] text-[34px] font-semibold tracking-[1.500px] text-white"
            >
              {h}
            </div>
          ))}
        </div>
        <div className="flex flex-col gap-[12.500px] leading-[52.500px] tracking-[3.000px]">
          {parts.map(([item, no, desc, qty]) => (
            <div key={item} className="flex">
              <div className="w-[53px] shrink-0 pt-[31px] pl-[20px]">
                <svg viewBox="0 0 21 24" className="h-[24px] w-[21px]">
                  <path d="M0 0L21 12L0 24Z" fill={NAVY} />
                </svg>
              </div>
              <div className="grid grid-cols-[129px_449px_408px_110px_310px] gap-[12.500px]">
                <div className="bg-white pt-[14.600px] pb-[15.400px] text-center">{item}</div>
                <div className="bg-white px-[25px] pt-[14.600px] pb-[15.400px]">{no}</div>
                <div className="bg-white px-[25px] pt-[14.600px] pb-[15.400px]">{desc}</div>
                <div className="bg-white pt-[14.600px] pb-[15.400px] text-center">{qty}</div>
                <div className="bg-white" />
              </div>
            </div>
          ))}
        </div>
      </div>
    </section>
  );
}

export default function App() {
  return (
    <div className="flex h-[2254px] w-[4008px] overflow-hidden bg-white">
      <Toolbar />
      <main className="relative w-[2124px] shrink-0">
        <Model />
        <Logo />
        <ContextMenu />
      </main>
      <PartsPanel />
    </div>
  );
}
